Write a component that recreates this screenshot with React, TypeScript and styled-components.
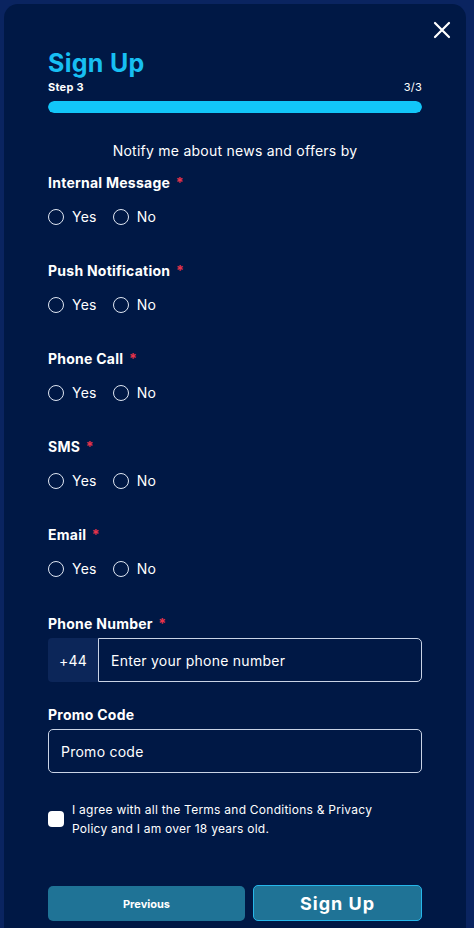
import React, { useState } from "react"
import styled, { createGlobalStyle } from "styled-components"

const GlobalStyle = createGlobalStyle`
    * { box-sizing: border-box; }
    html, body {
        margin: 0;
        padding: 0;
        background: #0a2460;
        font-family: Inter, "Noto Sans", sans-serif;
        letter-spacing: 0.25px;
        color: #ffffff;
    }
`

const channels = ["Internal Message", "Push Notification", "Phone Call", "SMS", "Email"]

function RadioGroup({ name }: { name: string }) {
    const [value, setValue] = useState<string | null>(null)
    return (
        <RadioRow>
            {["Yes", "No"].map(option => (
                <RadioLabel key={option}>
                    <RadioCircle
                        type="radio"
                        name={name}
                        checked={value === option}
                        onChange={() => setValue(option)}
                    />
                    {option}
                </RadioLabel>
            ))}
        </RadioRow>
    )
}

export default function App() {
    return (
        <>
            <GlobalStyle />
            <Page>
                <Card>
                    <CloseButton aria-label="Close">
                        <svg width="18" height="18" viewBox="0 0 18 18">
                            <path d="M2 2L16 16M16 2L2 16" stroke="#ffffff" strokeWidth="2.2" strokeLinecap="round" />
                        </svg>
                    </CloseButton>
                    <Title>Sign Up</Title>
                    <StepRow>
                        <StepName>Step 3</StepName>
                        <StepCount>3/3</StepCount>
                    </StepRow>
                    <Progress>
                        <ProgressFill style={{ width: "100%" }} />
                    </Progress>
                    <Intro>Notify me about news and offers by</Intro>

                    {channels.map(channel => (
                        <Field key={channel}>
                            <Label>
                                {channel} <Required>*</Required>
                            </Label>
                            <RadioGroup name={channel} />
                        </Field>
                    ))}

                    <InputField $space={13}>
                        <Label>
                            Phone Number <Required>*</Required>
                        </Label>
                        <PhoneGroup>
                            <Prefix>+44</Prefix>
                            <PhoneInput placeholder="Enter your phone number" />
                        </PhoneGroup>
                    </InputField>

                    <InputField $space={23}>
                        <Label>Promo Code</Label>
                        <TextInput placeholder="Promo code" />
                    </InputField>

                    <AgreeRow>
                        <CheckBox type="checkbox" />
                        <AgreeText>
                            I agree with all the Terms and Conditions &amp; Privacy Policy and I am over 18 years old.
                        </AgreeText>
                    </AgreeRow>

                    <ButtonRow>
                        <PrevButton>Previous</PrevButton>
                        <SubmitButton>Sign Up</SubmitButton>
                    </ButtonRow>
                </Card>
            </Page>
        </>
    )
}

const Page = styled.div`
    padding: 4px 8px 0 4px;
    height: 928px;
    overflow: hidden;
`

const Card = styled.div`
    position: relative;
    background: #001845;
    border-radius: 14px;
    padding: 44px 44px 40px 44px;
    min-height: 960px;
    display: flex;
    flex-direction: column;
`

const CloseButton = styled.button`
    position: absolute;
    top: 17px;
    right: 15px;
    background: none;
    border: 0;
    padding: 0;
    width: 18px;
    height: 18px;
    cursor: pointer;
`

const Title = styled.h1`
    margin: 0;
    font-size: 25px;
    line-height: 30px;
    font-weight: 700;
    letter-spacing: 0.3px;
    color: #17bff2;
`

const StepRow = styled.div`
    display: flex;
    justify-content: space-between;
    align-items: center;
    margin-top: 2px;
    font-size: 11px;
    line-height: 14px;
`

const StepName = styled.span`
    font-weight: 700;
`

const StepCount = styled.span`
    font-weight: 400;
`

const Progress = styled.div`
    margin-top: 7px;
    height: 12px;
    border-radius: 6px;
    background: #0c2a5c;
    overflow: hidden;
`

const ProgressFill = styled.div`
    height: 100%;
    border-radius: 6px;
    background: #12c6f8;
`

const Intro = styled.p`
    margin: 28px 0 0;
    text-align: center;
    font-size: 14px;
    line-height: 20px;
`

const Field = styled.div`
    display: flex;
    flex-direction: column;
    margin-top: 12px;
    height: 76px;
`

const Label = styled.div`
    font-size: 14px;
    line-height: 20px;
    font-weight: 700;
`

const Required = styled.span`
    color: #e8334a;
    margin-left: 2px;
`

const RadioRow = styled.div`
    display: flex;
    gap: 16px;
    margin-top: 14px;
`

const RadioLabel = styled.label`
    display: flex;
    align-items: center;
    gap: 8px;
    font-size: 14px;
    line-height: 20px;
    cursor: pointer;
`

const RadioCircle = styled.input`
    appearance: none;
    margin: 0;
    width: 16px;
    height: 16px;
    border: 1px solid #dfe6f2;
    border-radius: 50%;
    background: transparent;

    &:checked {
        background: #12c6f8;
        box-shadow: inset 0 0 0 3px #001845;
    }
`

const InputField = styled.div<{ $space: number }>`
    display: flex;
    flex-direction: column;
    gap: 4px;
    margin-top: ${props => props.$space}px;
`

const PhoneGroup = styled.div`
    display: flex;
    height: 44px;
`

const Prefix = styled.div`
    width: 50px;
    display: flex;
    align-items: center;
    justify-content: center;
    background: #0c2659;
    border-radius: 4px 0 0 4px;
    font-size: 14px;
`

const inputStyles = `
    height: 44px;
    background: transparent;
    border: 1px solid #c9d3e6;
    color: #ffffff;
    font-family: Inter, "Noto Sans", sans-serif;
    font-size: 14px;
    letter-spacing: 0.25px;
    padding: 0 12px;
    outline: none;

    &::placeholder {
        color: #ffffff;
        opacity: 1;
    }
`

const PhoneInput = styled.input`
    ${inputStyles}
    flex: 1;
    min-width: 0;
    border-radius: 0 5px 5px 0;
`

const TextInput = styled.input`
    ${inputStyles}
    width: 100%;
    border-radius: 5px;
`

const AgreeRow = styled.label`
    display: flex;
    align-items: center;
    gap: 8px;
    margin-top: 27px;
`

const CheckBox = styled.input`
    appearance: none;
    margin: 0;
    width: 16px;
    height: 16px;
    flex-shrink: 0;
    border-radius: 4px;
    background: #ffffff;
`

const AgreeText = styled.span`
    font-size: 12px;
    line-height: 19px;
    max-width: 320px;
`

const ButtonRow = styled.div`
    display: flex;
    gap: 8px;
    margin-top: 48px;
`

const PrevButton = styled.button`
    flex: 0 0 197px;
    height: 35px;
    border: 0;
    border-radius: 5px;
    background: #1f7396;
    color: #ffffff;
    font-family: Inter, "Noto Sans", sans-serif;
    font-size: 11px;
    font-weight: 700;
    cursor: pointer;
`

const SubmitButton = styled.button`
    flex: 1;
    height: 36px;
    margin-top: -1px;
    border: 1px solid #26b7ea;
    border-radius: 5px;
    background: #1f7396;
    color: #ffffff;
    font-family: Inter, "Noto Sans", sans-serif;
    font-size: 18px;
    font-weight: 700;
    letter-spacing: 1px;
    cursor: pointer;
`
